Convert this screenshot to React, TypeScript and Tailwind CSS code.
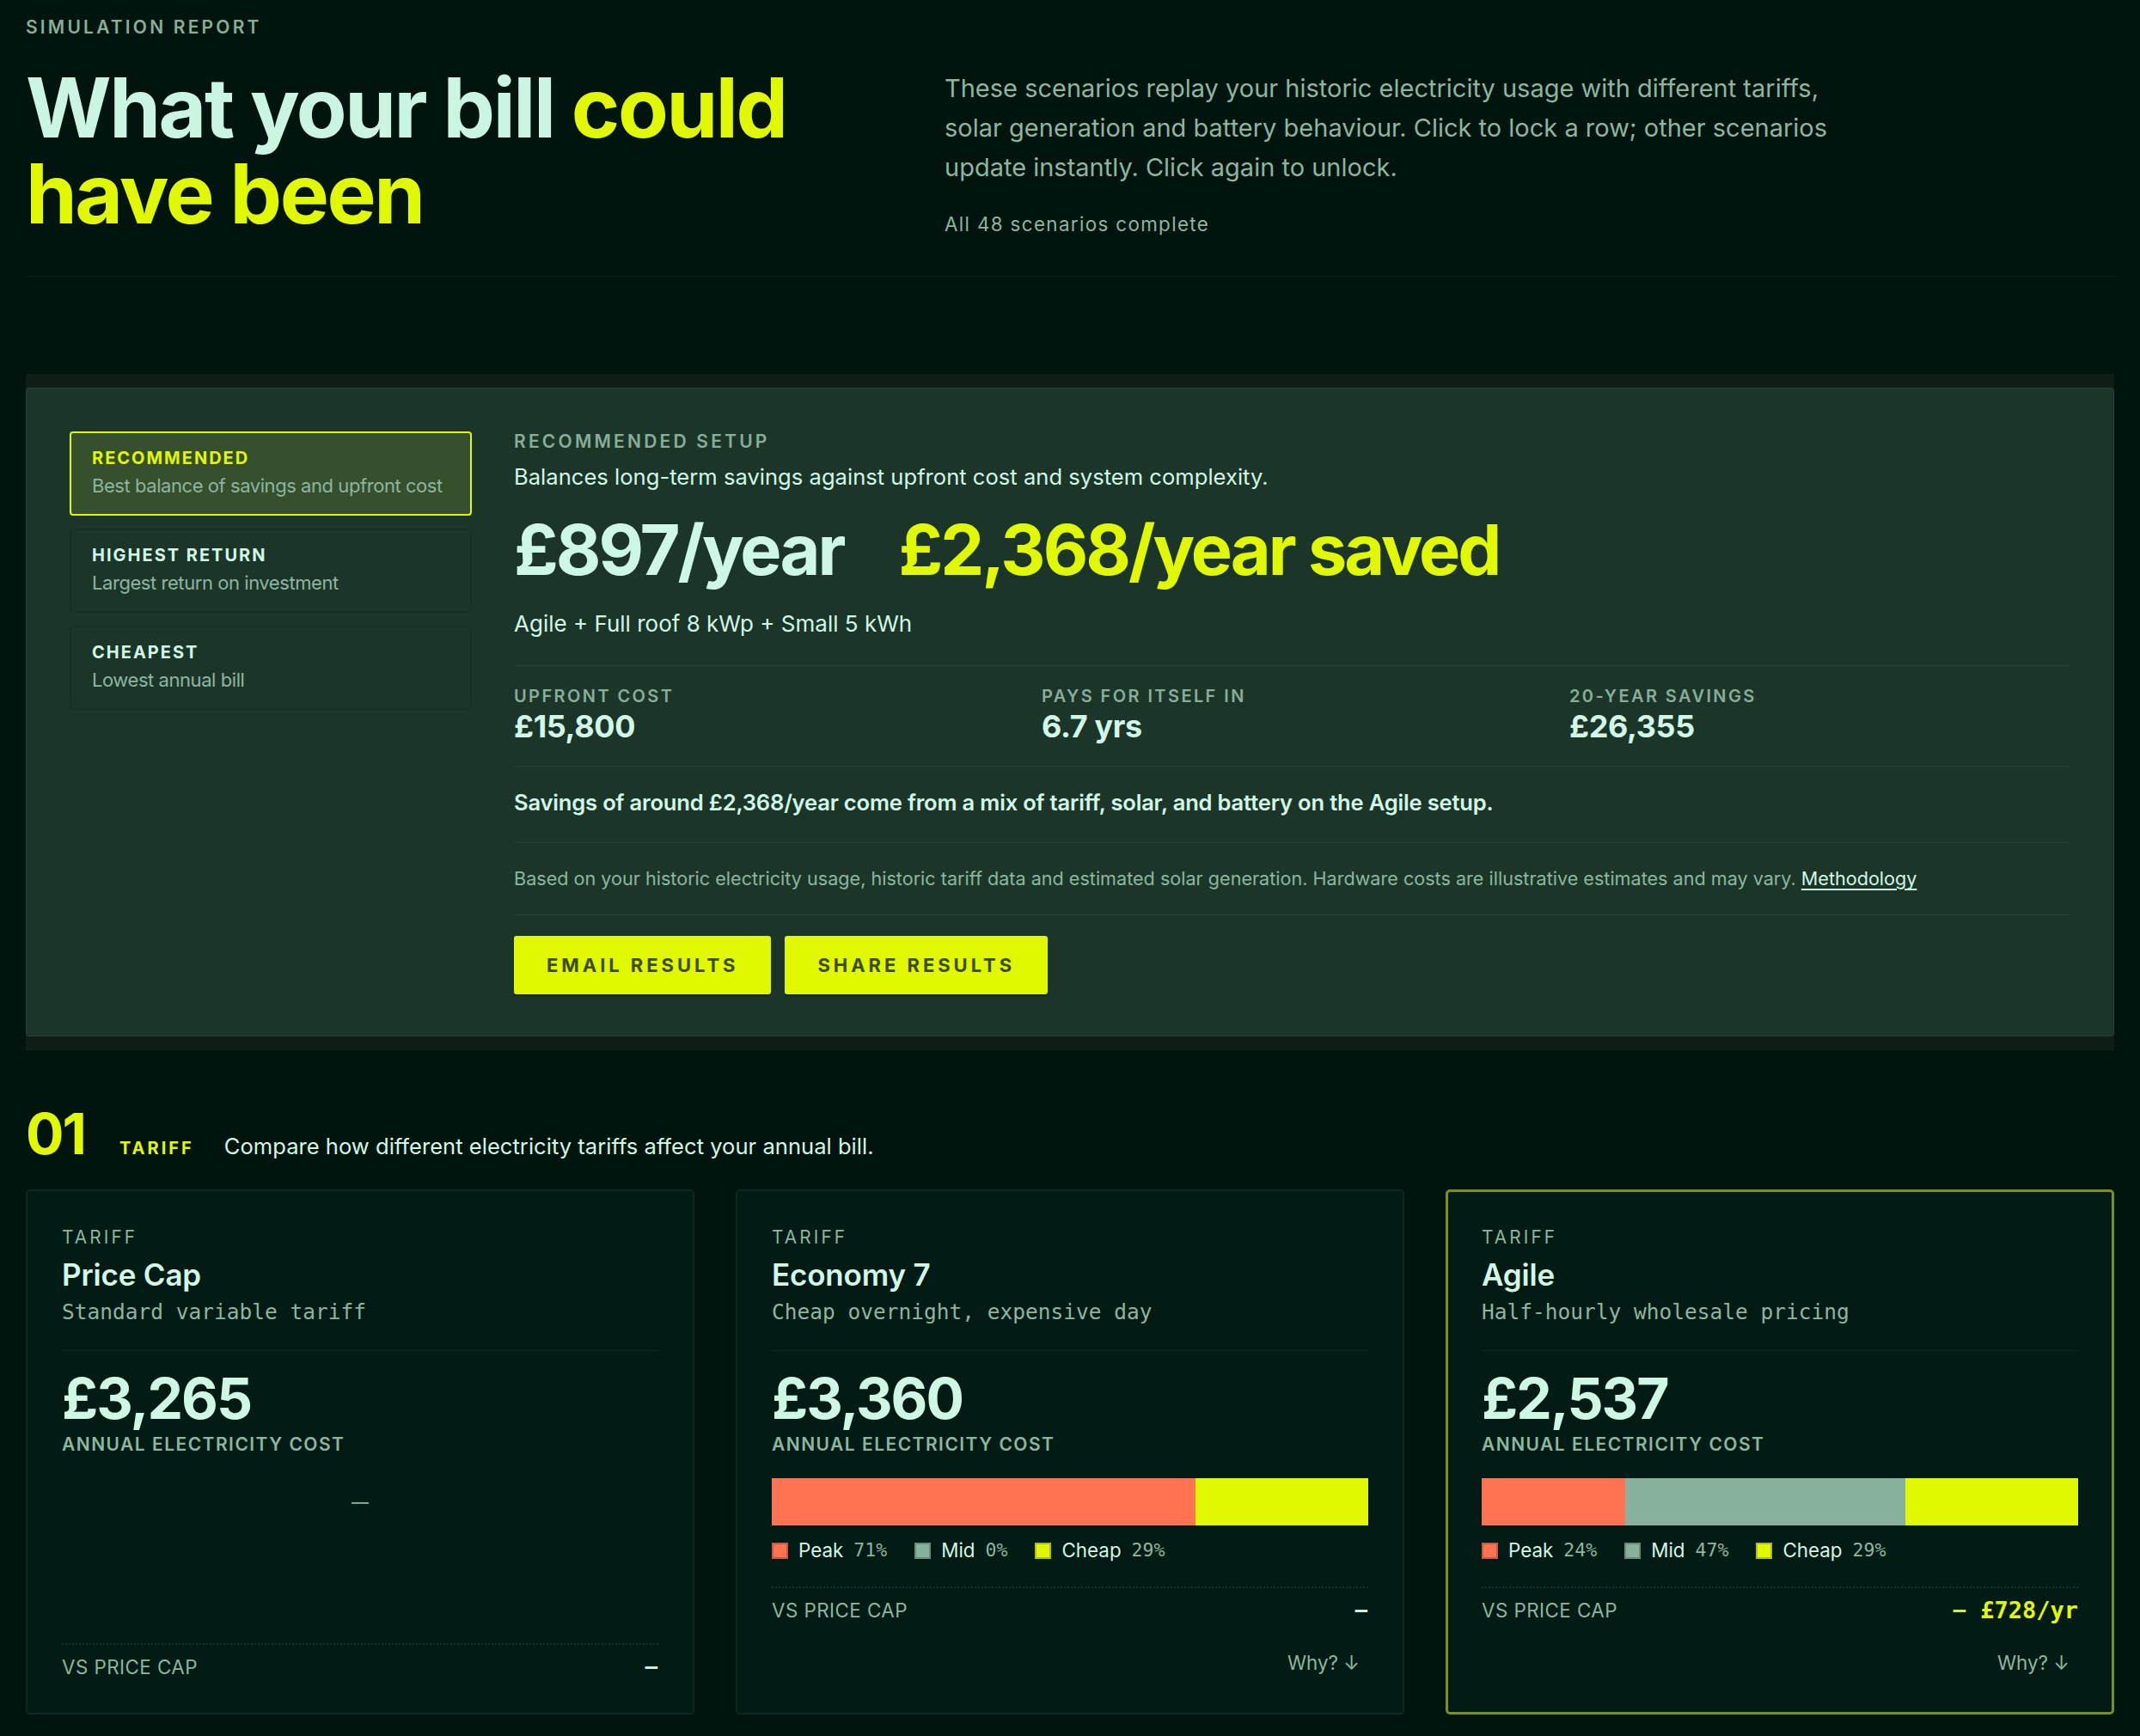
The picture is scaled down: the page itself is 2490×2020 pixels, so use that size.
import React from "react";

type Band = { name: string; pct: number; color: string };

type Tariff = {
  name: string;
  blurb: string;
  cost: string;
  bands: Band[] | null;
  delta: string | null;
  why: boolean;
  active: boolean;
};

const tariffs: Tariff[] = [
  {
    name: "Price Cap",
    blurb: "Standard variable tariff",
    cost: "£3,265",
    bands: null,
    delta: null,
    why: false,
    active: false,
  },
  {
    name: "Economy 7",
    blurb: "Cheap overnight, expensive day",
    cost: "£3,360",
    bands: [
      { name: "Peak", pct: 71, color: "#ff7352" },
      { name: "Mid", pct: 0, color: "#88b29e" },
      { name: "Cheap", pct: 29, color: "#e0f800" },
    ],
    delta: null,
    why: true,
    active: false,
  },
  {
    name: "Agile",
    blurb: "Half-hourly wholesale pricing",
    cost: "£2,537",
    bands: [
      { name: "Peak", pct: 24, color: "#ff7352" },
      { name: "Mid", pct: 47, color: "#88b29e" },
      { name: "Cheap", pct: 29, color: "#e0f800" },
    ],
    delta: "− £728/yr",
    why: true,
    active: true,
  },
];

const presets = [
  { title: "Recommended", sub: "Best balance of savings and upfront cost", active: true },
  { title: "Highest return", sub: "Largest return on investment", active: false },
  { title: "Cheapest", sub: "Lowest annual bill", active: false },
];

const stats = [
  { label: "Upfront cost", value: "£15,800" },
  { label: "Pays for itself in", value: "6.7 yrs" },
  { label: "20-year savings", value: "£26,355" },
];

function TariffCard({ t }: { t: Tariff }) {
  const frame = t.active
    ? "border-[3px] border-[#7a9119] px-[39px] pt-[39px]"
    : "border-2 border-[#0e281f] px-[40px] pt-[40px]";
  const bottom = t.why ? (t.active ? "pb-[41px]" : "pb-[42px]") : "pb-[37px]";
  return (
    <div className={`flex flex-col rounded-[5px] bg-[#021b14] ${frame} ${bottom}`}>
      <div className="border-b border-[#0f2a21] pb-[27px]">
        <p className="text-[20.8px] leading-[28px] tracking-[0.15em] text-[#8db5a1]">TARIFF</p>
        <p className="mt-[7px] text-[35px] font-semibold leading-[44px] tracking-[-0.005em] text-[#d2f7e7]">
          {t.name}
        </p>
        <p className="mt-[5px] font-['DejaVu_Sans_Mono',monospace] text-[24.5px] leading-[34px] text-[#8db5a1]">
          {t.blurb}
        </p>
      </div>
      <p className="pt-[22px] text-[66px] font-bold leading-[66px] tracking-[-0.03em] text-[#cff7e5]">{t.cost}</p>
      <p className="mt-[7px] text-[21px] font-semibold leading-[28px] tracking-[0.07em] text-[#8db5a1]">
        ANNUAL ELECTRICITY COST
      </p>
      {t.bands ? (
        <>
          <div className="mt-[25px] flex h-[55px] w-full">
            {t.bands.map((b) =>
              b.pct > 0 ? (
                <div key={b.name} className="h-full" style={{ width: `${b.pct}%`, backgroundColor: b.color }} />
              ) : null
            )}
          </div>
          <div className="mt-[15px] flex items-center gap-[32px]">
            {t.bands.map((b) => (
              <div key={b.name} className="flex items-center">
                <span
                  className="h-[19px] w-[19px] border-2 border-[rgba(0,0,0,0.22)]"
                  style={{ backgroundColor: b.color }}
                />
                <span className="ml-[12px] text-[22.4px] leading-[28px] text-[#d2f7e7]">{b.name}</span>
                <span className="ml-[12px] font-['DejaVu_Sans_Mono',monospace] text-[21.5px] leading-[28px] text-[#8db5a1]">
                  {b.pct}%
                </span>
              </div>
            ))}
          </div>
        </>
      ) : (
        <div className="mt-[25px] flex h-[55px] items-center justify-center text-[20px] text-[#8db5a1]">—</div>
      )}
      <div
        className={
          t.why
            ? "mt-[28px] border-t-2 border-dotted border-[#173329] pt-[10px]"
            : "mt-auto border-t-2 border-dotted border-[#173329] pt-[10px]"
        }
      >
        <div className="flex h-[32px] items-center justify-between">
          <span className="text-[22.4px] leading-[32px] tracking-[0.02em] text-[#8db5a1]">VS PRICE CAP</span>
          {t.delta ? (
            <span className="font-['DejaVu_Sans_Mono',monospace] text-[27px] font-bold leading-[32px] text-[#e0f800]">
              {t.delta}
            </span>
          ) : (
            <span className="font-['DejaVu_Sans_Mono',monospace] text-[27px] font-bold leading-[32px] text-[#cfeee0]">−</span>
          )}
        </div>
      </div>
      {t.why ? (
        <div className="mt-[29px] flex justify-end">
          <button className="px-[10px] text-[22.4px] leading-[32px] text-[#8db5a1]">Why? ↓</button>
        </div>
      ) : null}
    </div>
  );
}

export default function App() {
  return (
    <div className="min-h-[2020px] bg-[#02140e] px-[30px] pb-[40px] font-['Inter',sans-serif] text-[#cff7e5]">
      <header className="border-b border-[#0d2119] pb-[44px] pt-[16px]">
        <p className="text-[21px] font-semibold leading-[32px] tracking-[0.152em] text-[#89ad9b]">SIMULATION REPORT</p>
        <div className="mt-[27px] grid grid-cols-[1069px_1fr]">
          <h1 className="text-[96px] font-bold leading-[100px] tracking-[-0.025em] text-[#c9f5e2]">
            <span className="block">
              What your bill <span className="text-[#e0f800]">could</span>
            </span>
            <span className="block text-[#e0f800]">have been</span>
          </h1>
          <div className="mt-[5px]">
            <p className="max-w-[1050px] text-[29px] leading-[46px] text-[#8db5a1]">
              These scenarios replay your historic electricity usage with different tariffs, solar generation and
              battery behaviour. Click to lock a row; other scenarios update instantly. Click again to unlock.
            </p>
            <p className="mt-[27px] text-[22.4px] leading-[32px] tracking-[0.06em] text-[#8db5a1]">
              All 48 scenarios complete
            </p>
          </div>
        </div>
      </header>

      <section className="mt-[113px] bg-[#0e1e17] py-[16px]">
        <div className="grid grid-cols-[468px_1fr] gap-[49px] rounded-[4px] border border-[#25443a] bg-[#1c3529] px-[50px] pb-[48px] pt-[50px]">
          <div className="flex flex-col gap-[15px]">
            {presets.map((p) => (
              <div
                key={p.title}
                className={
                  p.active
                    ? "rounded-[4px] border-2 border-[#e0f800] bg-[#364f2c] px-[24px] pb-[17px] pt-[15px]"
                    : "rounded-[4px] border-2 border-[#193026] px-[24px] pb-[17px] pt-[15px]"
                }
              >
                <p
                  className={
                    p.active
                      ? "text-[20px] font-bold uppercase leading-[28px] tracking-[0.1em] text-[#e0f800]"
                      : "text-[20px] font-bold uppercase leading-[28px] tracking-[0.1em] text-[#d2f7e7]"
                  }
                >
                  {p.title}
                </p>
                <p className="mt-[2px] whitespace-nowrap text-[22px] leading-[32px] tracking-[-0.02em] text-[#8db5a1]">
                  {p.sub}
                </p>
              </div>
            ))}
          </div>

          <div>
            <p className="text-[21px] font-semibold leading-[24px] tracking-[0.153em] text-[#89ad9b]">RECOMMENDED SETUP</p>
            <p className="mt-[11px] text-[25.6px] leading-[36px] text-[#d2f7e7]">
              Balances long-term savings against upfront cost and system complexity.
            </p>
            <div className="mt-[27px] flex items-baseline gap-[64px] text-[81px] font-bold leading-[81px] tracking-[-0.037em]">
              <span className="text-[#cff7e5]">£897/year</span>
              <span className="text-[#e0f800]">£2,368/year saved</span>
            </div>
            <p className="mt-[27px] text-[26px] leading-[36px] text-[#d2f7e7]">Agile + Full roof 8 kWp + Small 5 kWh</p>

            <div className="mt-[30px] grid grid-cols-3 gap-[31px] border-t border-[#234236] pb-[26px] pt-[21px]">
              {stats.map((s) => (
                <div key={s.label}>
                  <p className="text-[20px] font-semibold uppercase leading-[28px] tracking-[0.12em] text-[#89ad9b]">
                    {s.label}
                  </p>
                  <p className="mt-[1px] text-[36px] font-bold leading-[40px] tracking-[-0.01em] text-[#d2f7e7]">
                    {s.value}
                  </p>
                </div>
              ))}
            </div>

            <div className="border-t border-[#234236] pb-[28px] pt-[24px]">
              <p className="text-[25.6px] font-semibold leading-[36px] tracking-[-0.008em] text-[#d2f7e7]">
                Savings of around £2,368/year come from a mix of tariff, solar, and battery on the Agile setup.
              </p>
            </div>

            <div className="border-t border-[#234236] pb-[26px] pt-[25px]">
              <p className="text-[21.6px] leading-[32px] text-[#8db5a1]">
                Based on your historic electricity usage, historic tariff data and estimated solar generation. Hardware
                costs are illustrative estimates and may vary.{" "}
                <a className="text-[#d2f7e7] underline underline-offset-[4px]" href="#methodology">
                  Methodology
                </a>
              </p>
            </div>

            <div className="flex gap-[16px] border-t border-[#234236] pt-[24px]">
              <button className="h-[68px] rounded-[3px] bg-[#e0f800] px-[38px] text-[22px] font-bold leading-[28px] tracking-[0.18em] text-[#3d4b0b] shadow-[0_2px_0_rgba(0,0,0,0.3)]">
                EMAIL RESULTS
              </button>
              <button className="h-[68px] rounded-[3px] bg-[#e0f800] px-[38px] text-[22px] font-bold leading-[28px] tracking-[0.18em] text-[#3d4b0b] shadow-[0_2px_0_rgba(0,0,0,0.3)]">
                SHARE RESULTS
              </button>
            </div>
          </div>
        </div>
      </section>

      <section className="mt-[64px]">
        <div className="flex items-baseline">
          <span className="text-[66px] font-bold leading-[66px] tracking-[-0.03em] text-[#e0f800]">01</span>
          <span className="ml-[40px] text-[20px] font-bold leading-[28px] tracking-[0.15em] text-[#e0f800]">TARIFF</span>
          <span className="ml-[35px] text-[25.6px] leading-[36px] text-[#d2f7e7]">
            Compare how different electricity tariffs affect your annual bill.
          </span>
        </div>
        <div className="mt-[32px] grid grid-cols-3 gap-[48px]">
          {tariffs.map((t) => (
            <TariffCard key={t.name} t={t} />
          ))}
        </div>
      </section>
    </div>
  );
}
